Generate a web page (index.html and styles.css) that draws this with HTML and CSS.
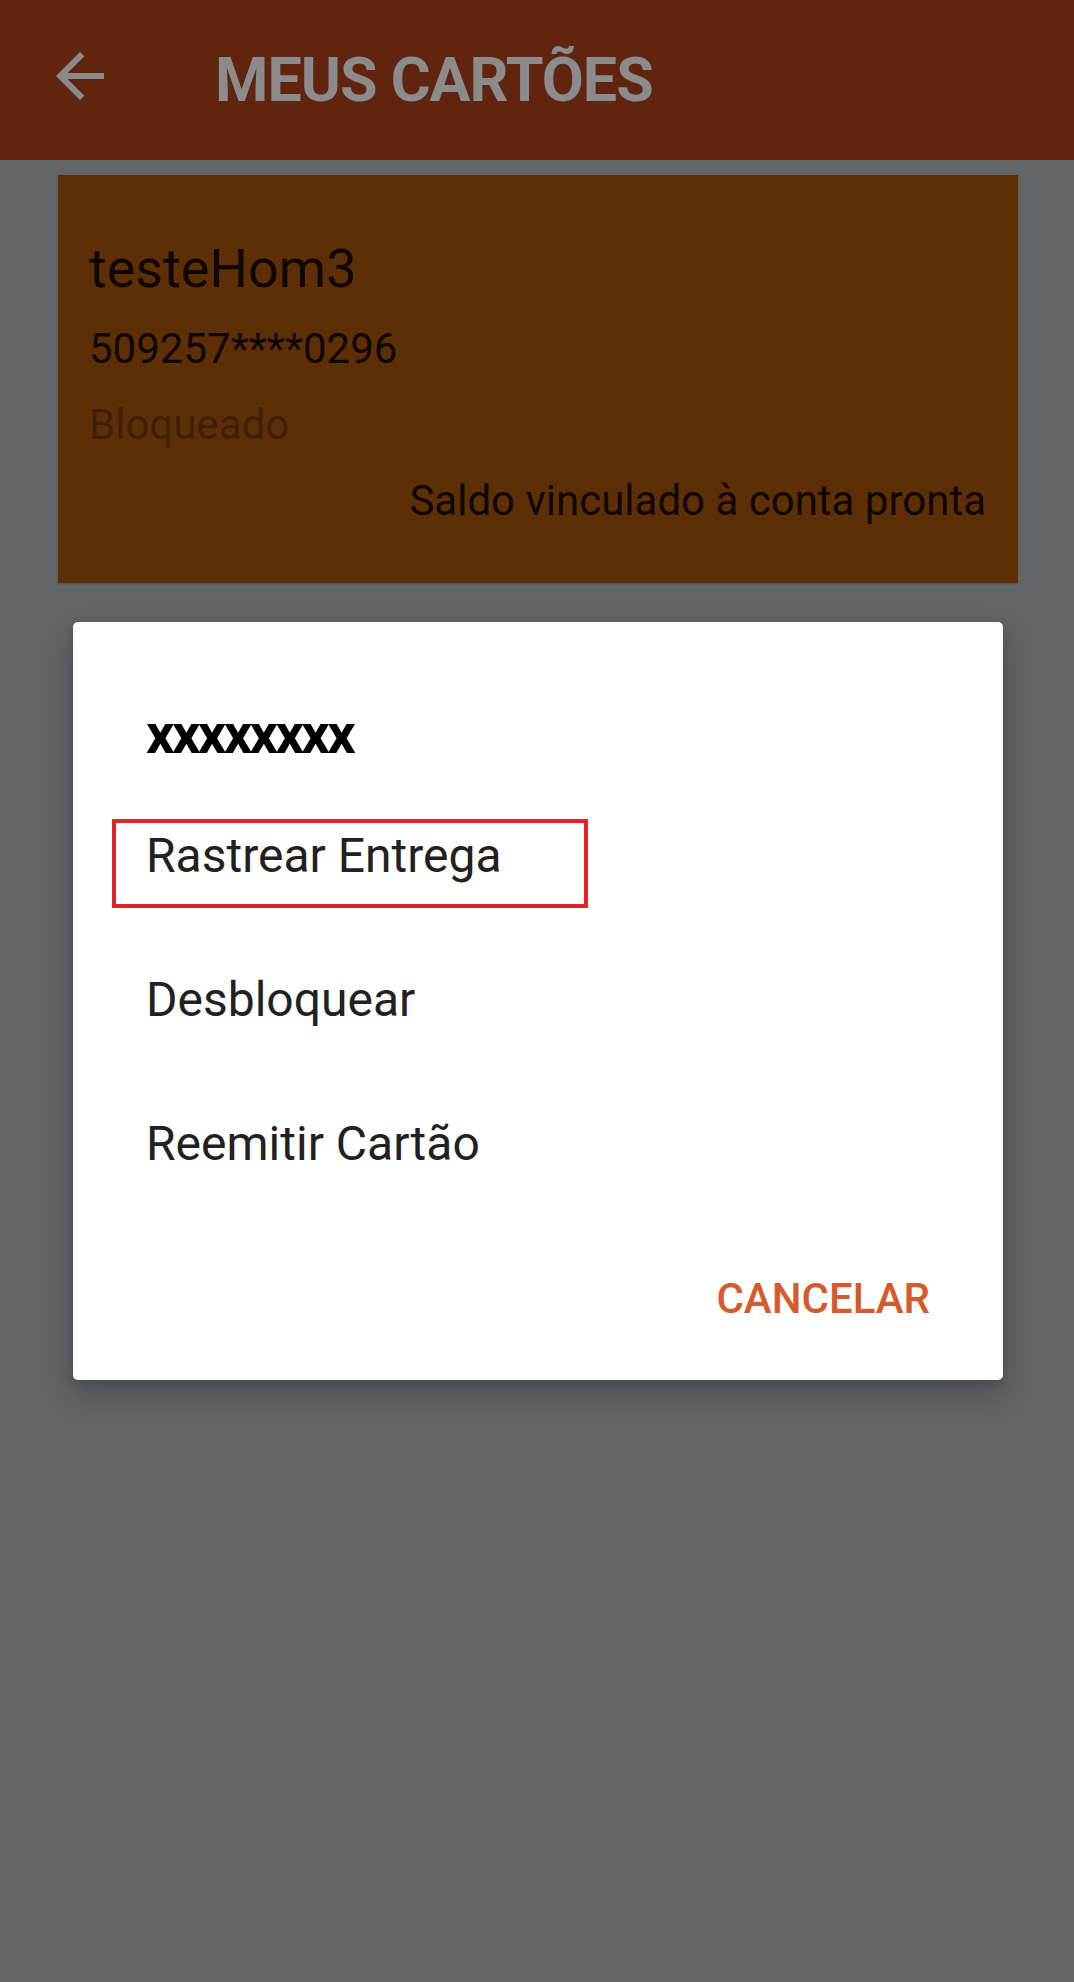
FILE: index.html
```html
<!DOCTYPE html>
<html lang="pt-BR">
<head>
<meta charset="utf-8">
<title>Meus Cartões</title>
<link rel="stylesheet" href="styles.css">
</head>
<body>
<header class="toolbar">
  <svg class="back" viewBox="0 0 24 24" width="72" height="72" aria-hidden="true">
    <path d="M20 11H7.83l5.59-5.59L12 4l-8 8 8 8 1.41-1.41L7.83 13H20v-2z"/>
  </svg>
  <h1 class="title">MEUS CARTÕES</h1>
</header>
<main class="content">
  <section class="card">
    <div class="card-name">testeHom3</div>
    <div class="card-number">509257****0296</div>
    <div class="card-status">Bloqueado</div>
    <div class="card-balance">Saldo vinculado à conta pronta</div>
  </section>
  <div class="dialog">
    <div class="dialog-title">xxxxxxxx</div>
    <ul class="options">
      <li class="option">Rastrear Entrega<span class="highlight"></span></li>
      <li class="option">Desbloquear</li>
      <li class="option">Reemitir Cartão</li>
    </ul>
    <div class="actions">
      <span class="btn">CANCELAR</span>
    </div>
  </div>
</main>
</body>
</html>
```
FILE: styles.css
```css
html, body {
  margin: 0;
  padding: 0;
}
body {
  background: #636467;
  font-family: Roboto, "Liberation Sans", sans-serif;
  min-height: 1982px;
}
.toolbar {
  height: 160px;
  background: #61240f;
  display: flex;
  align-items: center;
  padding-left: 44px;
  box-sizing: border-box;
}
.back {
  fill: #8b8b8b;
  margin-bottom: 8px;
  flex: none;
}
.title {
  margin: 0 0 0 99px;
  font-size: 61px;
  font-weight: 700;
  letter-spacing: -1px;
  line-height: 1;
  color: #8b8b8b;
}
.content {
  padding: 15px 0 0 0;
}
.card {
  margin: 0 56px 0 58px;
  background: #5e2f06;
  padding: 56px 32px 40px 31px;
  color: #0f0701;
  box-shadow: 0 1px 2px rgba(0,0,0,0.25);
}
.card-name {
  font-size: 54px;
  line-height: 76px;
}
.card-number {
  font-size: 42px;
  line-height: 84px;
}
.card-status {
  font-size: 42px;
  line-height: 67px;
  color: #3e1f07;
}
.card-balance {
  font-size: 42px;
  line-height: 85px;
  text-align: right;
}
.dialog {
  margin: 39px 71px 0 73px;
  background: #ffffff;
  border-radius: 5px;
  padding: 77px 0 51px 0;
  box-shadow: 0 14px 32px rgba(0,0,0,0.22), 0 4px 10px rgba(0,0,0,0.12);
}
.dialog-title {
  padding-left: 73px;
  font-size: 56px;
  font-weight: 700;
  letter-spacing: -2.6px;
  line-height: 70px;
  color: #000;
}
.options {
  list-style: none;
  margin: 15px 0 0 0;
  padding: 0;
}
.option {
  position: relative;
  padding-left: 73px;
  font-size: 48px;
  line-height: 144px;
  color: #212121;
}
.highlight {
  position: absolute;
  left: 39px;
  top: 35px;
  width: 476px;
  height: 89px;
  border: 4px solid #e3222b;
  box-sizing: border-box;
}
.actions {
  display: flex;
  justify-content: flex-end;
  padding-right: 73px;
  margin-top: 53px;
}
.btn {
  font-size: 42px;
  font-weight: 500;
  line-height: 60px;
  color: #d35b2c;
}
```
